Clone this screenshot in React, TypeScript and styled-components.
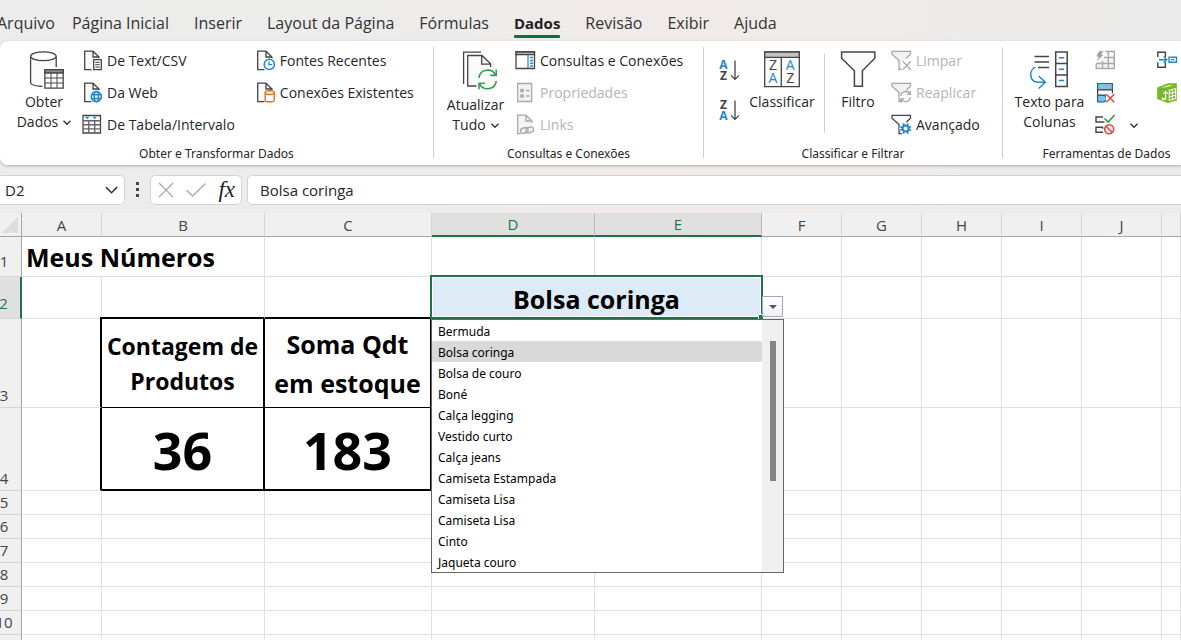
import React from "react";
import styled, { createGlobalStyle, css } from "styled-components";

const UI = `"Open Sans", "Segoe UI", "Noto Sans", sans-serif`;
const SMALL_UI = `"Noto Sans", "Segoe UI", sans-serif`;
const INK = "#444444";
const BLUE = "#1e88d2";
const GREEN = "#217346";
const MUTED = "#a9a9a9";

const GlobalStyle = createGlobalStyle`
  *, *::before, *::after { box-sizing: border-box; }
  body { margin: 0; overflow: hidden; font-family: ${UI}; }
  button, input { font: inherit; color: inherit; margin: 0; padding: 0; border: 0; background: none; }
  button { cursor: default; }
  svg { display: block; flex: none; overflow: visible; }
`;

const Page = styled.div`
  display: flex;
  flex-direction: column;
  height: 100vh;
  overflow: hidden;
  color: #262626;
  background: linear-gradient(90deg, #ececec 0%, #ececeb 30%, #f0ebe8 52%, #eeebe9 75%, #ebebeb 100%);
`;

/* Tabs */

const TabBar = styled.div`
  display: flex;
  flex: none;
  gap: 25px;
  height: 41px;
  margin-left: -3px;
  font-size: 16px;
  line-height: 22px;
`;

const Tab = styled.button<{ $active?: boolean; $first?: boolean }>`
  display: flex;
  flex-direction: column;
  padding-top: 12px;
  white-space: nowrap;
  color: #333333;
  ${(p) => p.$first && css`margin-right: -8px;`}
  ${(p) =>
    p.$active &&
    css`
      font-weight: 700;
      font-size: 15px;
      color: #222222;
      &::after {
        content: "";
        width: 100%;
        height: 3px;
        margin-top: 1px;
        border-radius: 1px;
        background: #0f703b;
      }
    `}
`;

/* Ribbon */

const RibbonBar = styled.div`
  display: flex;
  flex: none;
  height: 124px;
  overflow: hidden;
  background: #ffffff;
  border-radius: 8px 0 0 8px;
`;

const RibbonShadow = styled.div`
  flex: none;
  border-radius: 8px 0 0 8px;
  box-shadow: 0 1px 3px rgba(0, 0, 0, 0.28);
`;

const Group = styled.section<{ $width: number }>`
  display: flex;
  flex: none;
  flex-direction: column;
  width: ${(p) => p.$width}px;
  padding-top: 4px;
`;

const GroupBody = styled.div<{ $pad: number; $gap: number }>`
  display: flex;
  height: 96px;
  padding-left: ${(p) => p.$pad}px;
  gap: ${(p) => p.$gap}px;
`;

const GroupName = styled.div`
  padding-top: 1px;
  font-family: ${SMALL_UI};
  font-size: 12px;
  line-height: 23px;
  text-align: center;
  white-space: nowrap;
`;

const Divider = styled.div<{ $short?: boolean }>`
  flex: none;
  width: 1px;
  margin: ${(p) => (p.$short ? "9px 0 8px" : "6px 0 7px")};
  background: #cfcfcf;
`;

const BigButton = styled.button<{ $width: number; $low?: boolean }>`
  display: flex;
  flex: none;
  flex-direction: column;
  align-items: center;
  gap: ${(p) => (p.$low ? 6 : 3)}px;
  width: ${(p) => p.$width}px;
  padding-top: 6px;
  font-size: 14px;
  line-height: 20px;
  white-space: nowrap;
`;

const BigLine = styled.span`
  display: flex;
  align-items: center;
  justify-content: center;
  gap: 5px;
`;

const Column = styled.div<{ $wide?: boolean }>`
  display: flex;
  flex: none;
  flex-direction: column;
  padding-right: ${(p) => (p.$wide ? 18 : 0)}px;
`;

const SortColumn = styled(Column)`
  padding-top: 5px;
`;

const SmallButton = styled.button`
  display: flex;
  align-items: center;
  gap: 3px;
  height: 32px;
  font-size: 14px;
  line-height: 20px;
  white-space: nowrap;
  &:disabled { color: #b4b4b4; }
`;

const SortButton = styled(SmallButton)`
  height: 40px;
`;

const ChevronButton = styled.button`
  display: flex;
  align-items: center;
  justify-content: center;
  align-self: flex-end;
  width: 40px;
  height: 32px;
  padding-right: 4px;
`;

/* Formula bar */

const FormulaBar = styled.div`
  display: flex;
  flex: none;
  align-items: center;
  height: 48px;
  padding-top: 1px;
  font-size: 15px;
`;

const Field = styled.div`
  display: flex;
  align-items: center;
  height: 30px;
  background: #ffffff;
  border: 1px solid #d2d2d2;
  border-radius: 5px;
`;

const NameField = styled(Field)`
  width: 128px;
  margin-left: -3px;
  padding: 0 6px 0 7px;
`;

const NameInput = styled.input`
  flex: 1;
  min-width: 0;
  outline: none;
`;

const Dots = styled.div`
  display: flex;
  flex-direction: column;
  align-items: center;
  gap: 3px;
  width: 25px;
`;

const Dot = styled.span`
  width: 3px;
  height: 3px;
  background: #444444;
`;

const ActionField = styled(Field)`
  justify-content: space-between;
  width: 92px;
  padding: 0 6px 0 7px;
`;

const FxButton = styled.button`
  font-family: "Liberation Serif", serif;
  font-size: 23px;
  font-style: italic;
  font-weight: 400;
  line-height: 24px;
  color: #222222;
`;

const InputField = styled(Field)`
  flex: 1;
  margin-left: 5px;
  margin-right: -6px;
  padding-left: 12px;
`;

const FormulaInput = styled.input`
  width: 100%;
  outline: none;
`;

/* Worksheet */

const SheetArea = styled.div`
  flex: 1;
  min-height: 0;
  overflow: hidden;
  background: #ffffff;
`;

const Grid = styled.table`
  width: 100%;
  table-layout: fixed;
  border-collapse: separate;
  border-spacing: 0;
`;

const ColHead = styled.th<{ $selected?: boolean }>`
  height: 24px;
  padding: 0;
  font-size: 15px;
  font-weight: 400;
  line-height: 20px;
  color: ${(p) => (p.$selected ? GREEN : "#444444")};
  background: ${(p) => (p.$selected ? "#e0e0e0" : "#f0f0f0")};
  border-right: 1px solid ${(p) => (p.$selected ? "#b8b8b8" : "#d4d4d4")};
  border-bottom: ${(p) => (p.$selected ? `2px solid ${GREEN}` : "1px solid #a6a6a6")};
`;

const Corner = styled(ColHead)`
  padding: 4px 3px 3px 2px;
  vertical-align: top;
  border-right-color: #a6a6a6;
`;

const RowHead = styled.th<{ $selected?: boolean; $raised?: boolean }>`
  overflow: hidden;
  padding: 0 13px ${(p) => (p.$raised ? 5 : 2)}px 0;
  vertical-align: bottom;
  font-size: 15px;
  font-weight: 400;
  line-height: 20px;
  color: ${(p) => (p.$selected ? GREEN : "#444444")};
  background: ${(p) => (p.$selected ? "#e0e0e0" : "#f0f0f0")};
  border-right: ${(p) => (p.$selected ? `2px solid ${GREEN}` : "1px solid #a6a6a6")};
  border-bottom: 1px solid #d4d4d4;
`;

const RowNumber = styled.span`
  display: flex;
  justify-content: center;
  margin: 0 -4px;
`;

const Row = styled.tr<{ $height: number }>`
  height: ${(p) => p.$height}px;
`;

const LINES = { grid: "1px solid #e0e0e0", thin: "1px solid #000000", thick: "2px solid #000000" };
type Line = keyof typeof LINES;

const Cell = styled.td<{ $right?: Line; $bottom?: Line; $size?: number; $lead?: number }>`
  padding: 0;
  text-align: center;
  white-space: nowrap;
  color: #000000;
  font-weight: 700;
  font-size: ${(p) => p.$size ?? 16}px;
  line-height: ${(p) => p.$lead ?? 20}px;
  border-right: ${(p) => LINES[p.$right ?? "grid"]};
  border-bottom: ${(p) => LINES[p.$bottom ?? "grid"]};
`;

const SummaryCell = styled(Cell)<{ $corner?: boolean }>`
  position: relative;
  padding-top: 2px;
  ${(p) =>
    p.$corner &&
    css`
      &::before {
        content: "";
        position: absolute;
        top: -2px;
        left: -2px;
        width: 2px;
        height: 2px;
        background: #000000;
      }
    `}
`;

const TitleCell = styled(Cell)`
  padding-left: 4px;
  text-align: left;
`;

const PickerCell = styled(Cell)`
  position: relative;
  padding-top: 3px;
  background: #ddebf7;
`;

const Selection = styled.div`
  position: absolute;
  inset: -2px -2px -1px -2px;
  border: 2px solid ${GREEN};
  box-shadow: inset 0 0 0 1px #ffffff;
  pointer-events: none;
  &::after {
    content: "";
    position: absolute;
    right: -3px;
    bottom: -3px;
    width: 6px;
    height: 6px;
    background: ${GREEN};
    border: 1px solid #ffffff;
  }
`;

const OpenButton = styled.button`
  position: absolute;
  left: 100%;
  bottom: 1px;
  display: flex;
  align-items: center;
  justify-content: center;
  width: 21px;
  height: 21px;
  margin-left: 1px;
  background: linear-gradient(#ffffff, #eef0f5);
  border: 1px solid #a3a8b5;
`;

const Menu = styled.div`
  position: absolute;
  z-index: 2;
  top: 100%;
  left: -1px;
  display: flex;
  width: 353px;
  margin-top: 1px;
  background: #ffffff;
  border: 1px solid #666666;
  font-family: ${SMALL_UI};
  font-size: 12px;
  font-weight: 400;
  line-height: 20px;
  text-align: left;
`;

const Options = styled.ul`
  flex: 1;
  margin: 0;
  padding: 0;
  list-style: none;
  border-right: 1px solid #e9f1f9;
`;

const Option = styled.li<{ $selected?: boolean }>`
  height: 21px;
  padding: 2px 0 0 6px;
  border-radius: 2px;
  background: ${(p) => (p.$selected ? "#d9d9d9" : "transparent")};
`;

const Track = styled.div`
  width: 20px;
  padding: 21px 7px 0 7px;
  background: #f0f0f0;
`;

const Thumb = styled.div`
  width: 6px;
  height: 140px;
  background: #858585;
`;

/* Icons */

const Small = ({ children }: { children: React.ReactNode }) => (
  <svg width="22" height="22" viewBox="0 0 22 22" fill="none" stroke={INK} strokeWidth="1.3" aria-hidden="true">
    {children}
  </svg>
);

const Big = ({ children }: { children: React.ReactNode }) => (
  <svg width="40" height="38" viewBox="0 0 40 38" fill="none" stroke={INK} strokeWidth="1.3" aria-hidden="true">
    {children}
  </svg>
);

const Chevron = ({ size = 8 }: { size?: number }) => (
  <svg width={size} height={size > 8 ? 8 : 5} viewBox="0 0 8 5" fill="none" stroke="#333333" strokeWidth={size > 8 ? 0.9 : 1.4} aria-hidden="true">
    <path d="M.5.7 4 4.2 7.5.7" />
  </svg>
);

const Sheet = ({ color = INK }: { color?: string }) => (
  <>
    <path d="M2.7 1.2H11l6 6V20H2.7z" fill="#fafafa" stroke="none" />
    <path d="M9.5 19.6H2.7V1.2H11l6 5.8v1.2M11 1.2V7h6" stroke={color} />
  </>
);

const CsvIcon = () => (
  <Small>
    <Sheet />
    <path d="M11.7 9.7h7.6v10h-7.6z" fill="#fff" />
    <path d="M13.3 12.3h4.4M13.3 14.7h4.4M13.3 17.1h4.4" strokeWidth="1" />
  </Small>
);

const WebIcon = () => (
  <Small>
    <Sheet />
    <circle cx="14.3" cy="14.6" r="6.4" fill="#fff" stroke="none" />
    <g stroke={BLUE} strokeWidth="1.5">
      <circle cx="14.3" cy="14.6" r="5.1" />
      <ellipse cx="14.3" cy="14.6" rx="2.2" ry="5.1" />
      <path d="M9.6 12.8h9.4M9.6 16.4h9.4" />
    </g>
  </Small>
);

const TableIcon = () => (
  <Small>
    <path d="M1 1.5h17.5v17.5H1z" fill="#fff" />
    <path d="M1 6.7h17.5M1 10.8h17.5M1 14.9h17.5M6.8 6.7V19M12.7 6.7V19" stroke="#666" strokeWidth="1.4" />
    <path d="M3 2.8h4.4L5.2 5.2zM10.5 2.8h4.4l-2.2 2.4z" fill={BLUE} stroke="none" />
  </Small>
);

const RecentIcon = () => (
  <Small>
    <Sheet />
    <circle cx="14.3" cy="14.4" r="6.3" fill="#fff" stroke="none" />
    <circle cx="14.3" cy="14.4" r="5.1" stroke={BLUE} strokeWidth="1.5" fill="#fff" />
    <path d="M14 11.2v3.4h3.2" stroke={BLUE} />
  </Small>
);

const ConnectionIcon = () => (
  <Small>
    <Sheet />
    <g stroke="#e2701c" strokeWidth="1.4" fill="#fff">
      <path d="M10.2 10.8v7.4c0 1 2 1.6 4.5 1.6s4.5-.6 4.5-1.6v-7.4" />
      <ellipse cx="14.7" cy="10.6" rx="4.5" ry="1.9" />
    </g>
  </Small>
);

const PanelIcon = () => (
  <Small>
    <path d="M1 2h18.5v16.5H1z" fill="#fafafa" />
    <path d="M1 2h18.5v2.6H1z" fill="#b5b5b5" />
    <path d="M13 5v13" stroke={BLUE} strokeWidth="1.2" />
    <path d="M15.2 7.6H18M15.2 10.4H18M15.2 13.2H18M15.2 16H18" stroke={BLUE} strokeWidth="1.5" />
  </Small>
);

const PropertiesIcon = () => (
  <Small>
    <g stroke={MUTED}>
      <path d="M2.7 1.5h14v18h-14z" fill="#f3f3f3" />
      <path d="M5.5 7h3v3h-3zM5.5 12.5h3v3h-3z" fill={MUTED} strokeWidth=".4" />
      <path d="M11 8.5h3.5M11 14h3.5" />
    </g>
  </Small>
);

const LinksIcon = () => (
  <Small>
    <path d="M2.7 1.2H11l6 6V20H2.7z" fill="#f3f3f3" stroke="none" />
    <path d="M5.5 19.6H2.7V1.2H11l6 5.8v2M11 1.2V7h6" stroke={MUTED} />
    <g stroke={MUTED} strokeWidth="1.4">
      <rect x="5.5" y="14" width="7.6" height="5" rx="2.5" transform="rotate(-18 9.3 16.5)" fill="#fff" />
      <rect x="10.8" y="13.4" width="7.8" height="5" rx="2.5" transform="rotate(-18 14.7 15.9)" />
    </g>
  </Small>
);

const SortIcon = ({ desc }: { desc?: boolean }) => (
  <Small>
    <g fontFamily="Open Sans, sans-serif" fontSize="12" fontWeight="700" textAnchor="middle" stroke="none">
      <text x="5.5" y="9.6" fill={desc ? INK : BLUE}>{desc ? "Z" : "A"}</text>
      <text x="5.5" y="21" fill={desc ? BLUE : INK}>{desc ? "A" : "Z"}</text>
    </g>
    <path d="M17 1.5v18.5M13 16.4l4 4 4-4" />
  </Small>
);

const SmallFunnel = ({ color = INK, fill = "#fff" }: { color?: string; fill?: string }) => (
  <path d="M11 19.5H8V10.5L1 4.2V1.3h18.5v2.9L15 8.5" stroke={color} fill={fill} />
);

const ClearIcon = () => (
  <Small>
    <SmallFunnel color={MUTED} fill="#f1f1f1" />
    <path d="M10.5 10.5h10v10h-10z" fill="#fff" stroke="none" />
    <path d="M11.8 11.3l8 8.4M19.8 11.3l-8 8.4" stroke={MUTED} />
  </Small>
);

const ReapplyIcon = () => (
  <Small>
    <SmallFunnel color={MUTED} fill="#f1f1f1" />
    <circle cx="14.6" cy="14.6" r="6" fill="#fff" stroke="none" />
    <path d="M9.8 13.8a5 5 0 0 1 9-2.2M19.4 9v3.4H16M19.4 15.4a5 5 0 0 1-9 2.2M9.8 20.4V17h3.4" stroke={MUTED} />
  </Small>
);

const AdvancedIcon = () => (
  <Small>
    <SmallFunnel fill="#fafafa" />
    <circle cx="14.6" cy="14.5" r="6.2" fill="#fff" stroke="none" />
    <circle cx="14.6" cy="14.5" r="3" stroke={BLUE} strokeWidth="2" />
    <path d="M12.6 9.2v2.4M16.6 9.2v2.4M12.6 17.4v2.4M16.6 17.4v2.4M9.2 12.8l2.4 1M9.2 16.2l2.4-1M20 12.8l-2.4 1M20 16.2l-2.4-1" stroke={BLUE} strokeWidth="1.7" />
  </Small>
);

const FlashFillIcon = () => (
  <Small>
    <path d="M7.5 7.5h13V18H2v-5z" fill="#f3f3f3" stroke="none" />
    <path d="M11.5 1.5h8.8V18.5H2.2v-5M2.2 13.5h18M10 7.5h10.3M8.5 11v7.5M14.3 1.5v17" stroke={MUTED} strokeWidth="1.4" />
    <path d="M5 .7h5L7.6 4.6h2.6L2.3 12l1.9-5.2H1.8z" fill="#a0a0a0" stroke="#fff" strokeWidth=".7" />
  </Small>
);

const DuplicatesIcon = () => (
  <Small>
    <g stroke="#1268b3" strokeWidth="1.2">
      <path d="M3.6 1.5h14.8v6.3H3.6z" fill="#83beec" />
      <path d="M3.6 7.8h14.8v5.4H3.6z" fill="#fff" stroke={INK} />
      <path d="M3.6 13.5h7l2.5 3.2-2.5 3.1h-7z" fill="#83beec" />
    </g>
    <path d="M12 11.5h9v9h-9z" fill="#fff" stroke="none" />
    <path d="M12.3 12.2l8 8M20.3 12.2l-8 8" stroke="#e8403a" strokeWidth="1.4" />
  </Small>
);

const ValidationIcon = () => (
  <Small>
    <path d="M9 3H2v5h8.5M9 13.2H2v5h7M8.8 13.2v1.5" strokeWidth="1.4" />
    <path d="M10.5 4.5l3.6 3.6L20.6 1" stroke="#2e9b4f" strokeWidth="1.6" />
    <circle cx="15.2" cy="15.3" r="4.5" stroke="#e8403a" strokeWidth="1.6" fill="#fff" />
    <path d="M12 12.2l6.4 6.4" stroke="#e8403a" strokeWidth="1.5" />
  </Small>
);

const ConsolidateIcon = () => (
  <Small>
    <path d="M1.8 7V2.2h7.6V7M1.8 12.3v5h7.6v-5" strokeWidth="1.4" />
    <path d="M3 9.7h7.5M7.6 6.6l3.2 3.1-3.2 3.1" stroke={BLUE} strokeWidth="1.4" />
    <path d="M13 7.2h7.5v5H13z" stroke={BLUE} strokeWidth="1.4" />
    <path d="M15 9.7h3.5" stroke={BLUE} strokeWidth="1.2" />
  </Small>
);

const ModelIcon = () => (
  <Small>
    <path d="M1.2 5.6 12 1.2h8.8v17.4L12 21 1.2 17z" fill="#75b72b" stroke="none" />
    <path d="M4.5 5.4 12.6 2.9h4.6l-6.4 2.4z" fill="#d5ebb8" stroke="none" />
    <path d="M6.4 15.4v1.6h3.2V9.6M7.6 11.6l2-2.2 2 2.2" stroke="#fff" strokeWidth="1.3" />
    <path d="M13.2 8.2l6.4-1.6v10l-6.4 2z" stroke="#fff" strokeWidth="1" />
    <path d="M16.4 7.4v10.2M13.2 11.6l6.4-1.7M13.2 15l6.4-1.7" stroke="#fff" strokeWidth="1" />
  </Small>
);

const DatabaseIcon = () => (
  <Big>
    <path d="M6.6 5.3v26.2c0 2.4 5.7 4.3 12.8 4.3l12.8-6V5.3" fill="#fafafa" stroke="none" />
    <path d="M32.2 16V5.3M6.6 5.3v26.2c0 2.2 5.3 3.6 12.2 4" />
    <ellipse cx="19.4" cy="5.3" rx="12.8" ry="4.4" fill="#fff" />
    <path d="M18.5 16.5H40V38H18.5z" fill="#fff" stroke="none" />
    <path d="M20.9 18.6h18.3v18.5H20.9z" />
    <path d="M20.9 18.6h18.3v3.4H20.9z" fill="#8a8a8a" />
    <path d="M20.9 27h18.3M20.9 32h18.3M27 22v15M33 22v15" strokeWidth="1" />
  </Big>
);

const RefreshIcon = () => (
  <Big>
    <path d="M25 1.2H7.6V33" />
    <path d="M11.7 4.5H26l8.6 8.3V35H11.7z" fill="#fafafa" stroke="none" />
    <path d="M20.5 35H11.7V4.5H26l8.6 8.3V16M25.7 4.5v8.6h8.9" />
    <circle cx="31.6" cy="28.3" r="10.4" fill="#fff" stroke="none" />
    <path d="M22.9 27a8.8 8.8 0 0 1 16.6-3M40.2 18.4v6h-6M40.3 29.8a8.8 8.8 0 0 1-16.6 3M23 38.2v-6h6" stroke="#35a050" strokeWidth="1.6" />
  </Big>
);

const SortDialogIcon = () => (
  <Big>
    <path d="M2.7 1h34.6v34.7H2.7z" fill="#fafafa" />
    <path d="M2.7 1h34.6v5.3H2.7z" fill="#c4c1be" />
    <path d="M19.3 6.3v29.4" />
    <g fontFamily="Open Sans, sans-serif" fontSize="14" textAnchor="middle" stroke="none">
      <text x="11" y="19.2" fill={INK}>Z</text>
      <text x="11" y="32.2" fill={BLUE}>A</text>
      <text x="28.3" y="19.2" fill={BLUE}>A</text>
      <text x="28.3" y="32.2" fill={INK}>Z</text>
    </g>
  </Big>
);

const FunnelIcon = () => (
  <Big>
    <path d="M3.6 1h33.2v6.2L24.4 19.8v15.4h-8V19.8L3.6 7.2z" fill="#fafafa" strokeWidth="1.5" />
  </Big>
);

const TextToColumnsIcon = () => (
  <Big>
    <path d="M4.5 5.6H19M4.5 11H19M8 16.4h11" strokeWidth="1.5" />
    <path d="M25.7 1.1h11.5v34.3H25.7zM25.7 12.5h11.5M25.7 24h11.5" strokeWidth="1.5" fill="#fff" />
    <path d="M28.8 6.8h5.4M28.8 18.2h5.4M28.8 29.6h5.4" stroke={BLUE} strokeWidth="1.5" />
    <path d="M5.6 16.4C-1.6 18.6-.8 31.2 8 31.2h7.2M8.6 25l6.8 6.2-6.8 6.3" stroke={BLUE} strokeWidth="1.5" />
  </Big>
);

/* Data */

const TABS = ["Arquivo", "Página Inicial", "Inserir", "Layout da Página", "Fórmulas", "Dados", "Revisão", "Exibir", "Ajuda"];

const COLUMNS = [
  { name: "A", width: 80 },
  { name: "B", width: 163 },
  { name: "C", width: 167 },
  { name: "D", width: 163 },
  { name: "E", width: 167 },
  { name: "F", width: 80 },
  { name: "G", width: 80 },
  { name: "H", width: 80 },
  { name: "I", width: 80 },
  { name: "J", width: 80 },
];

const PRODUCTS = [
  "Bermuda", "Bolsa coringa", "Bolsa de couro", "Boné", "Calça legging", "Vestido curto",
  "Calça jeans", "Camiseta Estampada", "Camiseta Lisa", "Camiseta Lisa", "Cinto", "Jaqueta couro",
];

const Blank = ({ count }: { count: number }) => (
  <>
    {Array.from({ length: count }, (_, i) => (
      <Cell key={i} />
    ))}
  </>
);

const Heading = ({ n, selected, raised }: { n: number; selected?: boolean; raised?: boolean }) => (
  <RowHead scope="row" $selected={selected} $raised={raised}>
    <RowNumber>{n}</RowNumber>
  </RowHead>
);

const Ribbon = () => (
  <RibbonShadow>
    <RibbonBar>
      <Group $width={433}>
        <GroupBody $pad={8} $gap={2}>
          <BigButton $width={72}>
            <DatabaseIcon />
            <span>
              <BigLine>Obter</BigLine>
              <BigLine>Dados <Chevron /></BigLine>
            </span>
          </BigButton>
          <Column $wide>
            <SmallButton><CsvIcon />De Text/CSV</SmallButton>
            <SmallButton><WebIcon />Da Web</SmallButton>
            <SmallButton><TableIcon />De Tabela/Intervalo</SmallButton>
          </Column>
          <Column>
            <SmallButton><RecentIcon />Fontes Recentes</SmallButton>
            <SmallButton><ConnectionIcon />Conexões Existentes</SmallButton>
          </Column>
        </GroupBody>
        <GroupName>Obter e Transformar Dados</GroupName>
      </Group>
      <Divider />
      <Group $width={269}>
        <GroupBody $pad={6} $gap={4}>
          <BigButton $width={71} $low>
            <RefreshIcon />
            <span>
              <BigLine>Atualizar</BigLine>
              <BigLine>Tudo <Chevron /></BigLine>
            </span>
          </BigButton>
          <Column>
            <SmallButton><PanelIcon />Consultas e Conexões</SmallButton>
            <SmallButton disabled><PropertiesIcon />Propriedades</SmallButton>
            <SmallButton disabled><LinksIcon />Links</SmallButton>
          </Column>
        </GroupBody>
        <GroupName>Consultas e Conexões</GroupName>
      </Group>
      <Divider />
      <Group $width={298}>
        <GroupBody $pad={14} $gap={5}>
          <SortColumn>
            <SortButton aria-label="Classificar de A a Z"><SortIcon /></SortButton>
            <SortButton aria-label="Classificar de Z a A"><SortIcon desc /></SortButton>
          </SortColumn>
          <BigButton $width={74}>
            <SortDialogIcon />
            <BigLine>Classificar</BigLine>
          </BigButton>
          <Divider $short />
          <BigButton $width={56}>
            <FunnelIcon />
            <BigLine>Filtro</BigLine>
          </BigButton>
          <Column>
            <SmallButton disabled><ClearIcon />Limpar</SmallButton>
            <SmallButton disabled><ReapplyIcon />Reaplicar</SmallButton>
            <SmallButton><AdvancedIcon />Avançado</SmallButton>
          </Column>
        </GroupBody>
        <GroupName>Classificar e Filtrar</GroupName>
      </Group>
      <Divider />
      <Group $width={207}>
        <GroupBody $pad={2} $gap={0}>
          <BigButton $width={89}>
            <TextToColumnsIcon />
            <span>
              <BigLine>Texto para</BigLine>
              <BigLine>Colunas</BigLine>
            </span>
          </BigButton>
          <Column>
            <SmallButton disabled aria-label="Preenchimento Relâmpago"><FlashFillIcon /></SmallButton>
            <SmallButton aria-label="Remover Duplicatas"><DuplicatesIcon /></SmallButton>
            <SmallButton aria-label="Validação de Dados"><ValidationIcon /></SmallButton>
          </Column>
          <ChevronButton aria-label="Mais opções de validação"><Chevron /></ChevronButton>
          <Column>
            <SmallButton aria-label="Consolidar"><ConsolidateIcon /></SmallButton>
            <SmallButton aria-label="Modelo de Dados"><ModelIcon /></SmallButton>
          </Column>
        </GroupBody>
        <GroupName>Ferramentas de Dados</GroupName>
      </Group>
    </RibbonBar>
  </RibbonShadow>
);

const Worksheet = () => (
  <SheetArea>
    <Grid>
      <colgroup>
        <col width={22} />
        {COLUMNS.map((c) => (
          <col key={c.name} width={c.width} />
        ))}
        <col />
      </colgroup>
      <thead>
        <tr>
          <Corner as="td">
            <svg width="16" height="16" viewBox="0 0 16 16" aria-hidden="true">
              <path d="M16 0v16H0z" fill="#dcdcdc" />
            </svg>
          </Corner>
          {COLUMNS.map((c) => (
            <ColHead key={c.name} scope="col" $selected={c.name === "D" || c.name === "E"}>
              {c.name}
            </ColHead>
          ))}
          <ColHead scope="col" aria-label="K" />
        </tr>
      </thead>
      <tbody>
        <Row $height={40}>
          <Heading n={1} raised />
          <TitleCell colSpan={2} $size={25} $lead={36}>Meus Números</TitleCell>
          <Blank count={9} />
        </Row>
        <Row $height={42}>
          <Heading n={2} selected raised />
          <Cell />
          <Cell $bottom="thick" />
          <Cell $bottom="thick" />
          <PickerCell colSpan={2} $size={25} $lead={36}>
            Bolsa coringa
            <Selection />
            <OpenButton aria-label="Abrir lista">
              <svg width="8" height="4" viewBox="0 0 8 4" aria-hidden="true">
                <path d="M0 0h8L4 4z" fill="#555555" />
              </svg>
            </OpenButton>
            <Menu>
              <Options role="listbox" aria-label="Produtos">
                {PRODUCTS.map((name, i) => (
                  <Option key={i} role="option" aria-selected={i === 1} $selected={i === 1}>
                    {name}
                  </Option>
                ))}
              </Options>
              <Track>
                <Thumb />
              </Track>
            </Menu>
          </PickerCell>
          <Blank count={6} />
        </Row>
        <Row $height={89}>
          <Heading n={3} />
          <Cell $right="thick" />
          <SummaryCell $corner $right="thick" $bottom="thin" $size={23} $lead={35}>
            Contagem de
            <br />
            Produtos
          </SummaryCell>
          <SummaryCell $right="thick" $bottom="thin" $size={25} $lead={39}>
            Soma Qdt
            <br />
            em estoque
          </SummaryCell>
          <Blank count={8} />
        </Row>
        <Row $height={83}>
          <Heading n={4} />
          <Cell $right="thick" />
          <SummaryCell $right="thick" $bottom="thick" $size={52} $lead={64}>36</SummaryCell>
          <SummaryCell $right="thick" $bottom="thick" $size={52} $lead={64}>183</SummaryCell>
          <Blank count={8} />
        </Row>
        {[5, 6, 7, 8, 9, 10, 11].map((n) => (
          <Row key={n} $height={24}>
            <Heading n={n} />
            <Blank count={11} />
          </Row>
        ))}
      </tbody>
    </Grid>
  </SheetArea>
);

export default function App() {
  return (
    <Page>
      <GlobalStyle />
      <TabBar role="tablist">
        {TABS.map((name, i) => (
          <Tab key={name} role="tab" aria-selected={name === "Dados"} $active={name === "Dados"} $first={i === 0}>
            {name}
          </Tab>
        ))}
      </TabBar>
      <Ribbon />
      <FormulaBar>
        <NameField>
          <NameInput aria-label="Caixa de nome" defaultValue="D2" />
          <Chevron size={13} />
        </NameField>
        <Dots>
          <Dot />
          <Dot />
          <Dot />
        </Dots>
        <ActionField>
          <button aria-label="Cancelar">
            <svg width="16" height="16" viewBox="0 0 16 16" stroke={MUTED} strokeWidth="1.3" aria-hidden="true">
              <path d="M1 1l14 14M15 1 1 15" />
            </svg>
          </button>
          <button aria-label="Confirmar">
            <svg width="20" height="14" viewBox="0 0 20 14" fill="none" stroke={MUTED} strokeWidth="1.3" aria-hidden="true">
              <path d="M.5 7l6 6L19.5.5" />
            </svg>
          </button>
          <FxButton aria-label="Inserir função">fx</FxButton>
        </ActionField>
        <InputField>
          <FormulaInput aria-label="Barra de fórmulas" defaultValue="Bolsa coringa" />
        </InputField>
      </FormulaBar>
      <Worksheet />
    </Page>
  );
}
